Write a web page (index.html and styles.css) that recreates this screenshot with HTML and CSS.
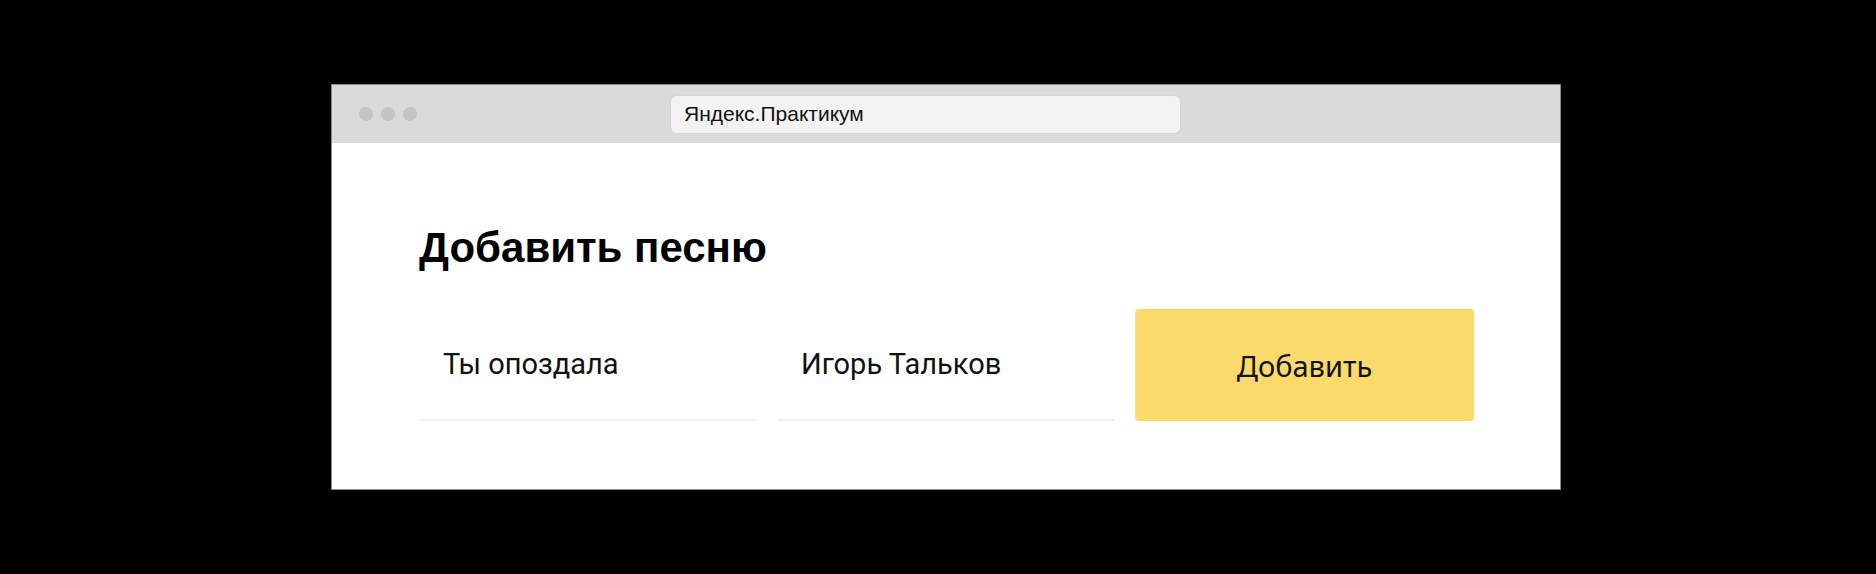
FILE: index.html
```html
<!DOCTYPE html>
<html lang="ru">
<head>
<meta charset="utf-8">
<title>Добавить песню</title>
<link rel="stylesheet" href="styles.css">
</head>
<body>
<div class="window">
  <div class="titlebar">
    <div class="dots">
      <span class="dot"></span>
      <span class="dot"></span>
      <span class="dot"></span>
    </div>
    <div class="address">Яндекс.Практикум</div>
  </div>
  <div class="content">
    <h1 class="title">Добавить песню</h1>
    <form class="form">
      <div class="field"><span class="field-text">Ты опоздала</span></div>
      <div class="field"><span class="field-text">Игорь Тальков</span></div>
      <button class="submit" type="button">Добавить</button>
    </form>
  </div>
</div>
</body>
</html>
```
FILE: styles.css
```css
html, body {
  margin: 0;
  background: #000;
}
body {
  padding: 84px 0 0 331px;
  height: 574px;
  box-sizing: border-box;
  overflow: hidden;
}
.window {
  width: 1230px;
  height: 406px;
  box-sizing: border-box;
  border: 1px solid #8a8a8a;
  background: #fff;
}
.titlebar {
  height: 58px;
  background: #dadada;
  display: flex;
  align-items: center;
  padding-left: 27px;
}
.dots {
  display: flex;
  gap: 8px;
}
.dot {
  width: 14px;
  height: 14px;
  border-radius: 50%;
  background: #c4c4c4;
}
.address {
  margin-left: 253px;
  width: 511px;
  height: 39px;
  box-sizing: border-box;
  border: 1px solid #d2d5d5;
  border-radius: 7px;
  background: #f3f3f3;
  display: flex;
  align-items: center;
  padding-left: 13px;
  font-family: "Liberation Sans", Arial, sans-serif;
  font-size: 21px;
  color: #111;
}
.content {
  padding: 80px 86px 0 87px;
}
.title {
  margin: 0;
  font-family: "Liberation Sans", Arial, sans-serif;
  font-weight: bold;
  font-size: 42px;
  line-height: 50px;
  color: #000;
}
.form {
  margin-top: 36px;
  display: grid;
  grid-template-columns: 338px 338px 339px;
  gap: 20px;
}
.field {
  height: 112px;
  box-sizing: border-box;
  border-bottom: 2px solid #f0f0f0;
  display: flex;
  align-items: center;
  padding-left: 24px;
}
.field-text {
  font-family: Roboto, "Noto Sans", sans-serif;
  font-size: 29px;
  color: #111;
}
.submit {
  height: 112px;
  border: none;
  border-radius: 4px;
  background: #f9da6a;
  font-family: "Noto Sans", "Open Sans", sans-serif;
  font-size: 29px;
  color: #111;
  padding: 0;
}
```
